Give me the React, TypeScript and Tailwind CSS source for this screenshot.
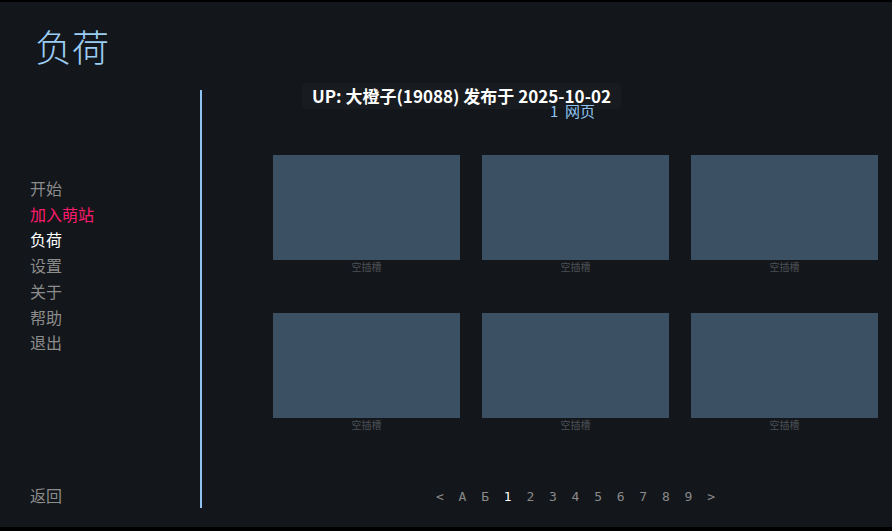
import React from 'react'

const menu = [
  { label: '开始', color: 'text-[#8c8c8c]' },
  { label: '加入萌站', color: 'text-[#ff1a6e]' },
  { label: '负荷', color: 'text-white' },
  { label: '设置', color: 'text-[#8c8c8c]' },
  { label: '关于', color: 'text-[#8c8c8c]' },
  { label: '帮助', color: 'text-[#8c8c8c]' },
  { label: '退出', color: 'text-[#8c8c8c]' },
]

const pages = ['<', 'A', 'Б', '1', '2', '3', '4', '5', '6', '7', '8', '9', '>']

const cjk = "font-['Noto_Sans_CJK_SC','Noto_Sans',sans-serif]"

const Slot = () => (
  <div className="flex flex-col">
    <div className="h-[105px] bg-[#3c5064]" />
    <div className="mt-[1px] text-center text-[10px] leading-[12px] text-[#4c5157]">空插槽</div>
  </div>
)

export default function App() {
  return (
    <div className={`w-[892px] h-[531px] bg-black pt-[2px] pb-[4px] ${cjk}`}>
      <div className="relative flex h-[525px] bg-[#13161a]">
        {/* sidebar */}
        <div className="flex w-[200px] flex-col">
          <h1 className="pl-[35px] pt-[19px] text-[37px] font-light leading-[50px] text-[#9ccdf5]">负荷</h1>
          <div className="mt-[105px] flex flex-col pl-[30px]">
            {menu.map((m) => (
              <div key={m.label} className={`text-[16px] leading-[25.7px] ${m.color}`}>{m.label}</div>
            ))}
          </div>
          <div className="mt-auto mb-[20px] pl-[30px] text-[16px] leading-[24px] text-[#8c8c8c]">返回</div>
        </div>

        {/* divider */}
        <div className="mt-[88px] mb-[19px] w-[2px] bg-[#8ec3f1]" />

        {/* main */}
        <div className="flex flex-1 flex-col pl-[71px] pr-[14px]">
          <div className="relative z-10 mt-[99px] h-[20px] pl-[277px] text-[15px] leading-[20px] text-[#8ec3f1]">
            1&nbsp;&nbsp;网页
          </div>
          <div className="mt-[34px] grid grid-cols-3 gap-x-[22px] gap-y-[40px]">
            {Array.from({ length: 6 }).map((_, i) => (
              <Slot key={i} />
            ))}
          </div>
          <div className="mt-auto mb-[20px] flex justify-center font-['DejaVu_Sans_Mono',monospace] text-[13px] font-light leading-[20px]">
            {pages.map((p) => (
              <span key={p} className={`w-[22.6px] text-center ${p === '1' ? 'text-white' : 'text-[#8a8a8a]'}`}>{p}</span>
            ))}
          </div>
        </div>

        {/* tooltip */}
        <div className="absolute left-[302px] top-[81px] rounded-[4px] bg-[#181b1f] px-[10px] text-[17px] font-bold leading-[26px] text-white">
          UP: 大橙子(19088) 发布于 2025-10-02
        </div>
      </div>
    </div>
  )
}
